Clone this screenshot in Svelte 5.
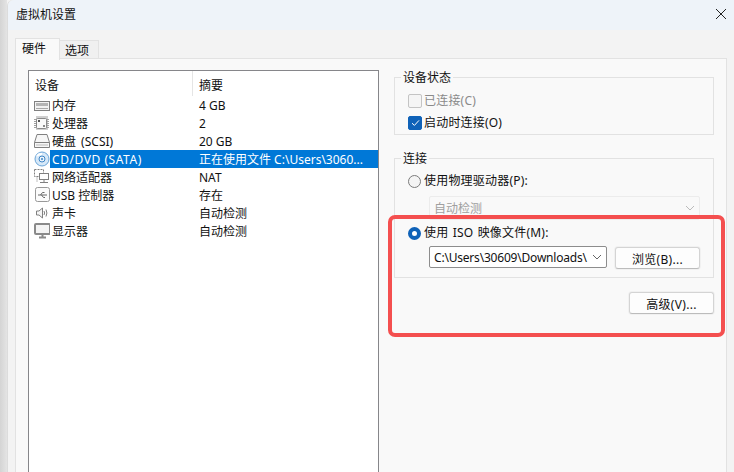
<script>
    const devices = [
        { icon: "mem", name: "内存", summary: "4 GB" },
        { icon: "cpu", name: "处理器", summary: "2" },
        { icon: "hdd", name: "硬盘 (SCSI)", summary: "20 GB", wide: "hdd" },
        { icon: "cd", name: "CD/DVD (SATA)", summary: "正在使用文件 C:\\Users\\3060...", selected: true, wide: "cd" },
        { icon: "net", name: "网络适配器", summary: "NAT" },
        { icon: "usb", name: "USB 控制器", summary: "存在" },
        { icon: "snd", name: "声卡", summary: "自动检测" },
        { icon: "mon", name: "显示器", summary: "自动检测" }
    ];
</script>

<div class="screen">
    <div class="shadow"></div>
    <div class="window">
        <header class="titlebar">
            <span>虚拟机设置</span>
            <svg width="12" height="12" viewBox="0 0 12 12"><path d="M1 1L11 11M11 1L1 11" stroke="#222" stroke-width="1" fill="none"/></svg>
        </header>

        <div class="tabs">
            <div class="tab active">硬件</div>
            <div class="tab">选项</div>
        </div>

        <div class="panel">
            <div class="list">
                <div class="list-head">
                    <div class="col-a">设备</div>
                    <div class="col-b">摘要</div>
                </div>
                {#each devices as d}
                    <div class="row">
                        <div class="col-a cell">
                            <svg class="icon" width="18" height="16" viewBox="0 0 18 16" fill="none" stroke="#808080" stroke-width="1">
                                {#if d.icon === "mem"}
                                    <rect x="2.5" y="4.5" width="15" height="9" fill="#f2f2f2"/>
                                    <rect x="4" y="6" width="12" height="3" fill="#b4b4b4" stroke="none"/>
                                    <path d="M4 11.5h12" stroke="#a8a8a8"/>
                                {:else if d.icon === "cpu"}
                                    <path d="M2 4.5h15M2 6.5h15M2 8.5h15M2 10.5h15M2 12.5h15M5 1v14M7 1v14M9 1v14M11 1v14M13 1v14M15 1v14" stroke="#a0a0a0"/>
                                    <rect x="4.5" y="3.5" width="10" height="10" rx="1" fill="#f8f8f8" stroke="#8a8a8a"/>
                                    <rect x="6" y="5" width="2" height="2" fill="#555" stroke="none"/>
                                    <rect x="11" y="10" width="2" height="2" fill="#888" stroke="none"/>
                                {:else if d.icon === "hdd"}
                                    <path d="M2.5 9.5L5 1.5H15L17.5 9.5V14.5H2.5Z" fill="#f6f6f6"/>
                                    <path d="M2.5 9.5H17.5"/>
                                    <path d="M4 12h12" stroke="#bbb"/>
                                {:else if d.icon === "cd"}
                                    <circle cx="10" cy="8" r="7" fill="#d6e8f8" stroke="#6aa5d8"/>
                                    <path d="M5 5Q7 2.500 10 3" stroke="#fff" stroke-width="2"/>
                                    <circle cx="10" cy="8" r="3" fill="#eaf3fb" stroke="#3f86c6"/>
                                    <circle cx="10" cy="8" r="1" fill="#3f86c6" stroke="none"/>
                                {:else if d.icon === "net"}
                                    <rect x="2.500" y="0.500" width="9" height="7" fill="#fff" stroke-dasharray="2 1"/>
                                    <rect x="7.500" y="4.500" width="9" height="6" fill="#fff"/>
                                    <path d="M12 10.500v3M8 13.500h8"/>
                                    <path d="M5 7.500v5" stroke-dasharray="1 1"/>
                                {:else if d.icon === "usb"}
                                    <rect x="3.500" y="0.500" width="14" height="14" rx="2" fill="#fbfbfb" stroke="#999"/>
                                    <path d="M6 8h9M8.500 8l2-2.500h2M9.500 8l2 2.500h1.500" stroke="#666"/>
                                {:else if d.icon === "snd"}
                                    <path d="M4.500 6H7L10.500 3V13L7 10H4.500Z" fill="#f6f6f6"/>
                                    <path d="M12 6Q13.200 8 12 10M14 4.500Q15.800 8 14 11.500"/>
                                {:else}
                                    <rect x="3" y="1" width="15" height="10" rx="1" fill="#f4f4f4" stroke="#8a8a8a" stroke-width="2"/>
                                    <path d="M7 14.500h7M10.500 11.500v3" stroke="#8a8a8a" stroke-width="2"/>
                                {/if}
                            </svg>
                            <span class="name {d.wide ?? ''}" class:sel={d.selected}>{d.name}</span>
                        </div>
                        <div class="col-b cell" class:sel={d.selected}>{d.summary}</div>
                    </div>
                {/each}
            </div>

            <div class="side">
                <fieldset class="status">
                    <legend>设备状态</legend>
                    <label class="opt off"><span class="check"></span>已连接(C)</label>
                    <label class="opt">
                        <span class="check on">
                            <svg width="9" height="8" viewBox="0 0 9 8"><path d="M1 4.200L3.400 6.400L8 1.400" stroke="#fff" stroke-width="1" fill="none"/></svg>
                        </span>启动时连接(O)
                    </label>
                </fieldset>

                <fieldset class="conn">
                    <legend>连接</legend>
                    <label class="opt"><span class="radio"></span>使用物理驱动器(P):</label>
                    <div class="select disabled">
                        <span>自动检测</span>
                        <svg width="10" height="6" viewBox="0 0 10 6"><path d="M1 1L5 5L9 1" stroke="#bbb" fill="none"/></svg>
                    </div>
                    <label class="opt iso"><span class="radio on"></span>使用 ISO 映像文件(M):</label>
                    <div class="file-row">
                        <div class="select path">
                            <span>C:\Users\30609\Downloads\</span>
                            <svg width="10" height="6" viewBox="0 0 10 6"><path d="M1 1L5 5L9 1" stroke="#666" fill="none"/></svg>
                        </div>
                        <button class="btn browse">浏览(B)...</button>
                    </div>
                </fieldset>

                <div class="adv">
                    <button class="btn">高级(V)...</button>
                </div>
            </div>
        </div>
    </div>
    <div class="callout"></div>
</div>

<style>
    :global(body) {
        margin: 0;
        background: #f3f3f3;
    }

    .screen {
        position: relative;
        width: 734px;
        height: 472px;
        overflow: hidden;
        display: flex;
        font-family: "Noto Sans", "Noto Sans CJK SC", sans-serif;
        font-size: 12px;
        color: #111;
        background: #f3f3f3;
    }

    .shadow {
        width: 7px;
        flex: none;
        background: linear-gradient(to right, #d4d4d4, #e4e4e4);
    }

    .window {
        flex: 1;
        display: flex;
        flex-direction: column;
        background: #f3f3f3;
        border-left: 1px solid #dcdcdc;
        border-top-left-radius: 6px;
    }

    .titlebar {
        height: 30px;
        flex: none;
        display: flex;
        align-items: center;
        justify-content: space-between;
        padding: 0 7px 2px 8px;
        box-sizing: border-box;
        background: #eef3f9;
        border-top-left-radius: 6px;
    }

    .tabs {
        display: flex;
        height: 21px;
        margin-top: 8px;
        padding-left: 7px;
        flex: none;
    }

    .tab {
        height: 19px;
        margin-top: 2px;
        padding: 0 9px 0 5px;
        line-height: 20px;
        background: #f0f0f0;
        border: 1px solid #e2e2e2;
        border-left: none;
        border-bottom: none;
    }

    .tab.active {
        height: 21px;
        margin-top: 0;
        line-height: 20px;
        background: #f9f9f9;
        border-left: 1px solid #e2e2e2;
        position: relative;
        z-index: 1;
        padding: 0 13px 0 6px;
    }

    .panel {
        flex: 1;
        display: flex;
        margin: -1px 7px 0 7px;
        padding: 11px 0 0 12px;
        background: #f9f9f9;
        border: 1px solid #e2e2e2;
        border-bottom: none;
    }

    .list {
        width: 349px;
        flex: none;
        background: #fff;
        border: 1px solid #86868a;
        border-bottom: none;
    }

    .list-head {
        display: flex;
        height: 25px;
        line-height: 29px;
    }

    .col-a {
        width: 164px;
        flex: none;
        padding-left: 7px;
        box-sizing: border-box;
    }

    .list-head .col-a {
        padding-left: 6px;
        border-right: 1px solid #e5e5e5;
    }

    .col-b {
        flex: 1;
        padding-left: 6px;
    }

    .row {
        display: flex;
        height: 18px;
        line-height: 20px;
    }

    .cell {
        white-space: nowrap;
    }

    .row .col-a {
        display: flex;
        align-items: center;
        padding-left: 3px;
    }

    .icon {
        flex: none;
    }

    .name {
        height: 18px;
        flex: 1;
        padding-left: 2px;
    }

    .name.cd {
        letter-spacing: 0.55px;
    }

    .name.hdd {
        word-spacing: 2px;
    }

    .sel {
        background: #0078d7;
        color: #fff;
    }

    .side {
        flex: 1;
        display: flex;
        flex-direction: column;
        padding: 0 12px 0 15px;
        min-width: 0;
    }

    fieldset {
        margin: 0;
        padding: 0;
        border: 1px solid #e2e2e2;
        min-width: 0;
        display: flex;
        flex-direction: column;
    }

    legend {
        padding: 2px 2px 0;
        margin-left: -7px;
        line-height: 14px;
    }

    .status {
        height: 66px;
        box-sizing: border-box;
        padding: 8px 0 0 13px;
        gap: 6px;
        margin-top: -1px;
    }

    .conn {
        margin-top: 15px;
        height: 128px;
        box-sizing: border-box;
        padding: 7px 13px 0 13px;
    }

    .opt {
        display: flex;
        align-items: center;
        height: 16px;
        line-height: 18px;
        letter-spacing: 0.2px;
    }

    .opt.off {
        color: #8a8a8a;
    }

    .check {
        width: 12px;
        height: 12px;
        margin-right: 2px;
        border: 1px solid #c4c4c4;
        border-radius: 2px;
        background: #f5f5f5;
        display: flex;
        align-items: center;
        justify-content: center;
        flex: none;
    }

    .check.on {
        background: #0f62b8;
        border-color: #0f62b8;
    }

    .radio {
        width: 11px;
        height: 11px;
        margin-right: 3px;
        border: 1px solid #7b7b7b;
        border-radius: 50%;
        background: #f4f4f4;
        flex: none;
    }

    .radio.on {
        width: 5px;
        height: 5px;
        border: 4px solid #0f62b8;
        background: #fff;
    }

    .select {
        display: flex;
        align-items: center;
        justify-content: space-between;
        box-sizing: border-box;
        border-radius: 2px;
        padding: 0 4px;
    }

    .select.disabled {
        height: 24px;
        width: 271px;
        margin: 7px 0 0 21px;
        border: 1px solid #ececec;
        color: #a0a0a0;
        background: #f9f9f9;
    }

    .opt.iso {
        margin-top: 5px;
        word-spacing: 1px;
    }

    .file-row {
        display: flex;
        align-items: flex-start;
        gap: 8px;
        margin: 5px 0 0 21px;
    }

    .select.path {
        width: 178px;
        height: 22px;
        border: 1px solid #8d8d8d;
        background: #fff;
    }

    .select.path span {
        white-space: nowrap;
        letter-spacing: -0.2px;
        line-height: 19px;
    }

    .select.path svg {
        flex: none;
    }

    .btn {
        width: 85px;
        height: 22px;
        padding: 1px 0 0;
        font: inherit;
        letter-spacing: 0.3px;
        color: #111;
        background: #fdfdfd;
        border: 1px solid #d4d4d4;
        border-bottom-color: #bcbcbc;
        border-radius: 3px;
        box-shadow: 0 0 0 1px #f1f1f1;
    }

    .btn.browse {
        margin-top: 1px;
    }

    .adv {
        display: flex;
        justify-content: flex-end;
        margin-top: 14px;
    }

    /* annotation drawn over the screenshot */
    .callout {
        position: absolute;
        left: 388px;
        top: 215px;
        width: 337px;
        height: 122px;
        box-sizing: border-box;
        border: 4px solid #f44f4f;
        border-radius: 7px;
    }
</style>
